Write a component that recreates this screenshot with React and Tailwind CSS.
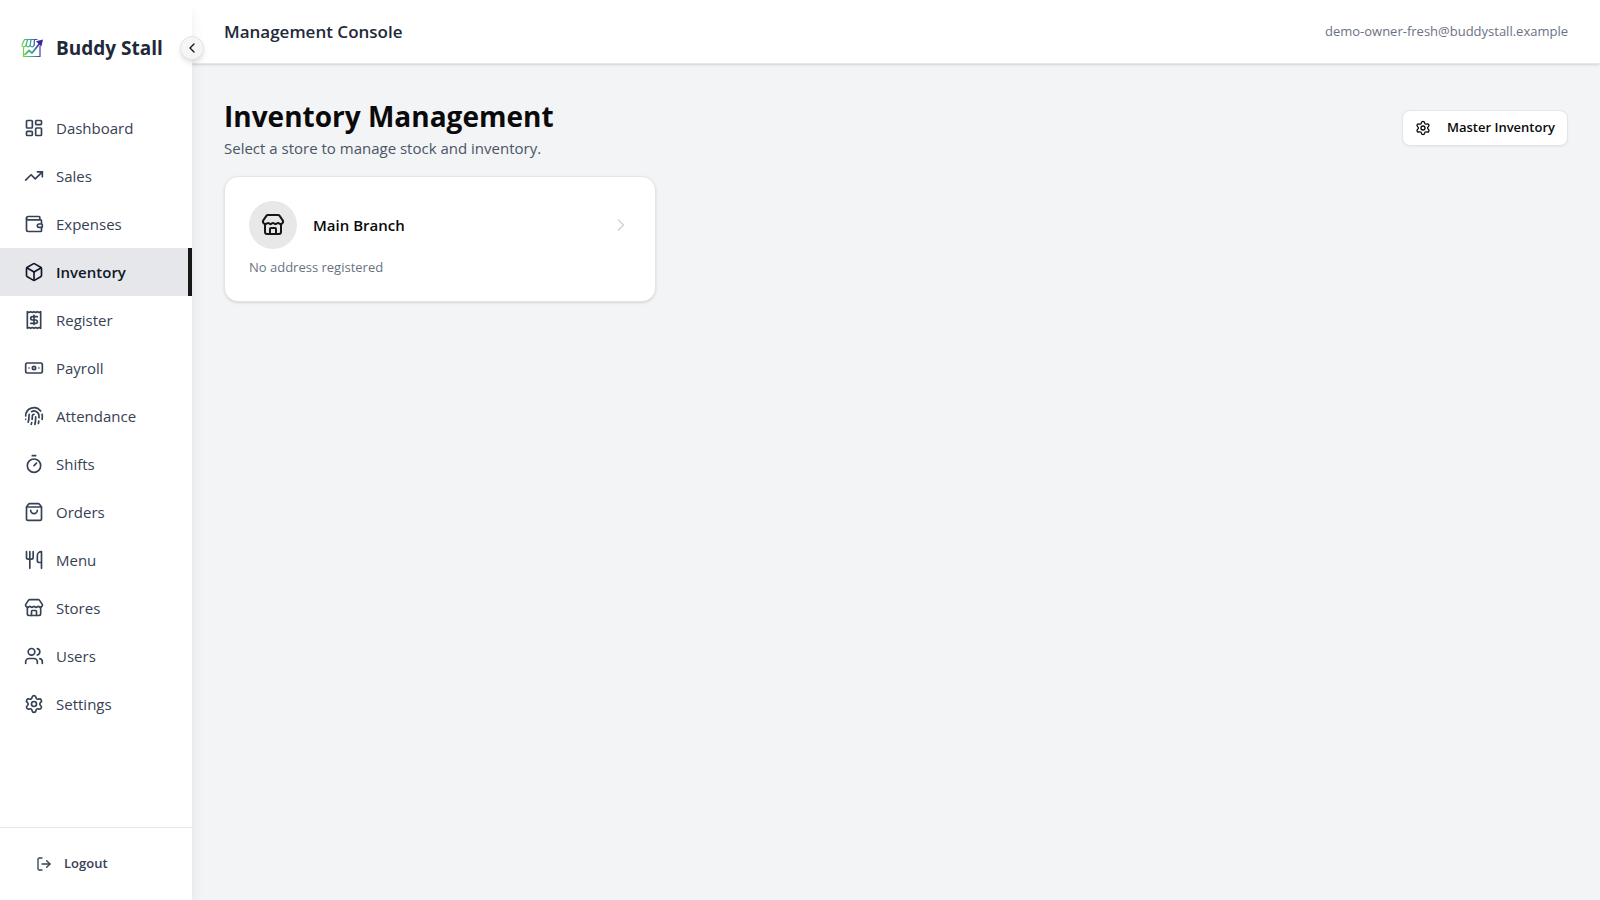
import React, { useState } from "react";
import {
  LayoutDashboard,
  TrendingUp,
  Wallet,
  Box,
  Receipt,
  Banknote,
  Fingerprint,
  Timer,
  ShoppingBag,
  Utensils,
  Store,
  Users,
  Settings,
  LogOut,
  ChevronLeft,
  ChevronRight,
} from "lucide-react";

const navItems = [
  { name: "Dashboard", icon: LayoutDashboard },
  { name: "Sales", icon: TrendingUp },
  { name: "Expenses", icon: Wallet },
  { name: "Inventory", icon: Box },
  { name: "Register", icon: Receipt },
  { name: "Payroll", icon: Banknote },
  { name: "Attendance", icon: Fingerprint },
  { name: "Shifts", icon: Timer },
  { name: "Orders", icon: ShoppingBag },
  { name: "Menu", icon: Utensils },
  { name: "Stores", icon: Store },
  { name: "Users", icon: Users },
  { name: "Settings", icon: Settings },
];

const stores = [{ id: 1, name: "Main Branch", address: "" }];

const Logo = () => (
  <svg viewBox="0 0 24 24" className="w-6 h-6 shrink-0" fill="none" aria-hidden="true">
    <defs>
      <linearGradient id="logo" x1="1" y1="12" x2="23" y2="8" gradientUnits="userSpaceOnUse">
        <stop offset="0" stopColor="#7ddc3c" />
        <stop offset="0.45" stopColor="#35a89a" />
        <stop offset="0.75" stopColor="#4a45b5" />
        <stop offset="1" stopColor="#3a1f9c" />
      </linearGradient>
    </defs>
    <g stroke="url(#logo)" strokeLinecap="round" strokeLinejoin="round">
      <path d="M4.5 3.5H17M4.5 3.5L2 9c0 2.4 3.6 2.4 4 0 .4 2.4 3.8 2.4 4.2 0 .4 2.4 3.6 2.4 4 0" strokeWidth="1.2" />
      <path d="M7.7 3.5L6 9M11 3.5L10.2 9M14.4 3.5L14.2 9" strokeWidth="1.3" />
      <path d="M3.5 11.5V20.5H20V10" strokeWidth="1.2" />
      <path d="M5 18.5l4-4 3 2.5L20 7" strokeWidth="1.8" />
    </g>
    <path d="M23 3.5l-7 1.8 5.4 5.2z" fill="#3c249e" />
  </svg>
);

const Sidebar = ({ active, setActive, collapsed, setCollapsed }) => (
  <aside className={`relative z-20 flex flex-col shrink-0 bg-white shadow-lg ${collapsed ? "w-18" : "w-48"}`}>
    <div className="flex items-center h-24 px-5 gap-3">
      <Logo />
      {!collapsed && <span className="text-[19px] font-bold text-gray-800 whitespace-nowrap">Buddy Stall</span>}
    </div>
    <button
      type="button"
      aria-label="Toggle sidebar"
      onClick={() => setCollapsed(!collapsed)}
      className="absolute top-9 -right-3 flex items-center justify-center w-6 h-6 rounded-full bg-neutral-100 text-neutral-900 border border-neutral-200 shadow-md"
    >
      <ChevronLeft className={collapsed ? "w-4 h-4 shrink-0 rotate-180" : "w-4 h-4 shrink-0"} />
    </button>

    <nav className="flex-1 pt-2">
      {navItems.map(({ name, icon: Icon }) => (
        <a
          key={name}
          href={`#${name.toLowerCase()}`}
          onClick={() => setActive(name)}
          className={`flex items-center gap-3 h-12 px-6 text-[15px] ${
            active === name
              ? "bg-gray-200 text-gray-900 font-semibold border-r-4 border-neutral-900"
              : "text-gray-700"
          }`}
        >
          <Icon className="w-5 h-5 shrink-0" />
          {!collapsed && <span>{name}</span>}
        </a>
      ))}
    </nav>

    <div className="p-4 border-t border-gray-200">
      <button type="button" className="flex items-center gap-3 w-full h-10 px-5 text-[13px] font-semibold text-gray-700">
        <LogOut className="w-4 h-4 shrink-0" />
        {!collapsed && <span>Logout</span>}
      </button>
    </div>
  </aside>
);

const StoreCard = ({ store }) => (
  <a href={`#store-${store.id}`} className="block p-6 bg-white border border-neutral-200 rounded-[14px] shadow-sm">
    <div className="flex items-center gap-4">
      <div className="flex items-center justify-center w-12 h-12 rounded-full bg-[#e8e8e8]">
        <Store className="w-6 h-6 text-neutral-900" />
      </div>
      <h2 className="flex-1 text-[15px] font-semibold text-neutral-950">{store.name}</h2>
      <ChevronRight className="w-5 h-5 text-gray-300" />
    </div>
    <p className="mt-2 text-[13px] leading-5 text-gray-500">{store.address || "No address registered"}</p>
  </a>
);

const App = () => {
  const [active, setActive] = useState("Inventory");
  const [collapsed, setCollapsed] = useState(false);

  return (
    <div className="flex min-h-screen bg-gray-100 font-['Segoe_UI','Open_Sans',sans-serif]">
      <Sidebar active={active} setActive={setActive} collapsed={collapsed} setCollapsed={setCollapsed} />

      <div className="flex flex-col flex-1 min-w-0">
        <header className="flex items-center justify-between h-16 px-8 bg-white border-b border-gray-200 shadow-sm">
          <p className="text-[17px] font-semibold text-gray-800">Management Console</p>
          <span className="text-[13px] text-gray-500">demo-owner-fresh@buddystall.example</span>
        </header>

        <main className="flex-1 p-8">
          <div className="flex items-center justify-between mb-4">
            <div>
              <h1 className="text-[28px] leading-10 font-bold text-neutral-950">Inventory Management</h1>
              <p className="text-[15px] leading-6 text-gray-600">Select a store to manage stock and inventory.</p>
            </div>
            <button
              type="button"
              className="flex items-center gap-4 h-9 px-3 text-[13px] font-semibold text-neutral-950 bg-white border border-neutral-200 rounded-lg shadow-xs"
            >
              <Settings className="w-4 h-4" />
              Master Inventory
            </button>
          </div>

          <div className="grid grid-cols-1 md:grid-cols-2 lg:grid-cols-3 gap-6">
            {stores.map((store) => (
              <StoreCard key={store.id} store={store} />
            ))}
          </div>
        </main>
      </div>
    </div>
  );
};

export default App;
